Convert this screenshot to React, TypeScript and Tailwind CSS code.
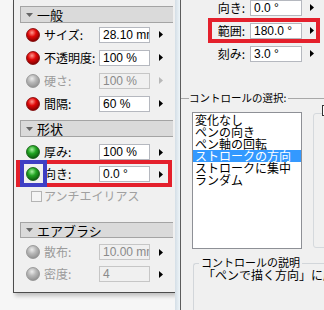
import React from "react";

const JP = "font-['Noto_Sans_CJK_JP',sans-serif]";
const NUM = "font-['Liberation_Sans_Narrow','Liberation_Sans',sans-serif]";

type Tone = "red" | "green" | "gray";

const SPHERE: Record<Tone, [string, string, string]> = {
  red: ["#ff9a90", "#e00808", "#7c0000"],
  green: ["#a8f0a0", "#22a522", "#0c560c"],
  gray: ["#ececec", "#b8b8b8", "#8e8e8e"],
};

function Sphere({ tone }: { tone: Tone }) {
  const c = SPHERE[tone];
  const id = `sph-${tone}`;
  return (
    <svg width="14" height="14" viewBox="0 0 14 14" className="shrink-0">
      <defs>
        <radialGradient id={id} cx="42%" cy="32%" r="70%">
          <stop offset="0" stopColor={c[0]} />
          <stop offset="0.45" stopColor={c[1]} />
          <stop offset="1" stopColor={c[2]} />
        </radialGradient>
      </defs>
      <circle cx="7" cy="7" r="6.5" fill={`url(#${id})`} stroke={c[2]} strokeWidth="0.8" />
    </svg>
  );
}

function Arrow({ muted }: { muted?: boolean }) {
  return (
    <svg width="4" height="7" viewBox="0 0 4 7" className="shrink-0">
      <polygon points="0,0 4,3.5 0,7" fill={muted ? "#b8b8b8" : "#000"} />
    </svg>
  );
}

function Field({ value, disabled, w = "w-[51px]" }: { value: string; disabled?: boolean; w?: string }) {
  return (
    <div
      className={`${w} h-[16px] shrink-0 border px-[3px] flex items-center overflow-hidden whitespace-nowrap text-[12px] ${NUM} ${
        disabled ? "border-[#c6c6c6] bg-[#f0f0f0] text-[#8a8a8a]" : "border-[#b5b8bf] bg-white text-black"
      }`}
    >
      {value}
    </div>
  );
}

function Header({ title, h = "h-[17px]" }: { title: string; h?: string }) {
  return (
    <div className={`${h} flex items-center gap-[4px] border-y border-l border-[#a4a4a4] bg-[#dadada] pl-[5px]`}>
      <svg width="7" height="4" viewBox="0 0 7 4">
        <polygon points="0,0 7,0 3.5,4" fill="#666" />
      </svg>
      <span className={`${JP} text-[13px] leading-none text-black`}>{title}</span>
    </div>
  );
}

function Param({
  tone,
  label,
  value,
  disabled,
  mutedArrow,
  h = "h-[23px]",
}: {
  tone: Tone;
  label: string;
  value: string;
  disabled?: boolean;
  mutedArrow?: boolean;
  h?: string;
}) {
  return (
    <div className={`${h} flex items-center pl-[6px]`}>
      <Sphere tone={tone} />
      <span
        className={`${JP} ml-[4px] w-[55px] shrink-0 whitespace-nowrap text-[12px] leading-none ${
          disabled ? "text-[#9b9b9b]" : "text-black"
        }`}
      >
        {label}
      </span>
      <Field value={value} disabled={disabled} />
      <div className="ml-[9px]">
        <Arrow muted={mutedArrow} />
      </div>
    </div>
  );
}

function RightRow({ label, value }: { label: string; value: string }) {
  return (
    <div className="h-[23px] flex items-center">
      <span className={`${JP} w-[65px] pr-[1px] text-right text-[12px] leading-none text-black`}>{label}</span>
      <div className="ml-[4px]">
        <Field value={value} w="w-[52px]" />
      </div>
      <div className="ml-[8px]">
        <Arrow />
      </div>
    </div>
  );
}

const MODES = ["変化なし", "ペンの向き", "ペン軸の回転", "ストロークの方向", "ストロークに集中", "ランダム"];

export default function App() {
  return (
    <div className="relative w-[324px] h-[310px] overflow-hidden flex bg-[#f6f6f6]">
      {/* brush palette */}
      <div className="w-[175px] shrink-0 pl-[13px]">
        <div className="h-[293px] border-l border-b border-[#4c4c4c] bg-[#f0f0f0] pl-[6px] pr-[2px] pt-[6px] shadow-[2px_3px_4px_rgba(0,0,0,0.22)]">
          <Header title="一般" />
          <Param tone="red" label="サイズ:" value="28.10 mm" />
          <Param tone="red" label="不透明度:" value="100 %" />
          <Param tone="gray" label="硬さ:" value="100 %" disabled mutedArrow />
          <Param tone="red" label="間隔:" value="60 %" />

          <div className="mt-[5px]">
            <Header title="形状" />
          </div>
          <div className="mt-[4px]">
            <Param tone="green" label="厚み:" value="100 %" h="h-[22px]" />
            <Param tone="green" label="向き:" value="0.0 °" h="h-[22px]" />
            <div className="h-[22px] flex items-center pl-[11px]">
              <div className="w-[11px] h-[11px] border border-[#b4b4b4] bg-[#f4f4f4]" />
              <span className={`${JP} ml-[2px] text-[12px] leading-none text-[#a0a0a0]`}>アンチエイリアス</span>
            </div>
          </div>

          <div className="mt-[15px]">
            <Header title="エアブラシ" h="h-[16px]" />
          </div>
          <div className="mt-[3px]">
            <Param tone="gray" label="散布:" value="10.00 mm" disabled h="h-[22px]" />
            <Param tone="gray" label="密度:" value="4" disabled h="h-[22px]" />
          </div>
        </div>
      </div>

      {/* gap between the two windows */}
      <div className="w-[5px] shrink-0 bg-gradient-to-r from-[#d4dee6] to-[#eef5f9]" />

      {/* brush settings dialog */}
      <div className="flex-1 border-l border-[#5c5c5c] bg-[#f0f0f0]">
        <div className="-mt-[4px]">
          <RightRow label="向き:" value="0.0 °" />
          <RightRow label="範囲:" value="180.0 °" />
          <RightRow label="刻み:" value="3.0 °" />
        </div>

        <div className="mt-[26px] h-[14px] flex items-center">
          <div className="w-[8px] h-px bg-[#a8a8a8]" />
          <span className={`${JP} text-[10.5px] leading-none text-black whitespace-nowrap`}>コントロールの選択:</span>
          <div className="ml-[2px] flex-1 h-px bg-[#a8a8a8]" />
        </div>

        <div className="mt-[7px] flex items-start">
          <div className="ml-[11px] w-[110px] h-[137px] shrink-0 border border-[#8e9096] bg-white pt-[1px]">
            {MODES.map((m) => (
              <div
                key={m}
                className={`${JP} h-[12px] pl-[2px] text-[12px] leading-[12px] whitespace-nowrap ${
                  m === "ストロークの方向" ? "bg-[#3399ff] text-white" : "text-black"
                }`}
              >
                {m}
              </div>
            ))}
          </div>
          <div className="ml-[11px] mt-[1px] w-[40px] h-[135px] shrink-0 rounded-[3px] border border-[#d5d9dd]" />
        </div>

        <div className="relative ml-[12px] mt-[14px] h-[60px] rounded-tl-[3px] border-l border-t border-[#d2d6da]">
          <span className={`${JP} absolute -top-[7px] left-[5px] bg-[#f0f0f0] px-[2px] text-[11px] leading-none text-black whitespace-nowrap`}>
            コントロールの説明
          </span>
          <div className={`${JP} pt-[5px] pl-[9px] text-[12px] leading-[12px] text-black whitespace-nowrap`}>
            「ペンで描く方向」に応じ
          </div>
        </div>
      </div>

      {/* annotation boxes */}
      <div className="absolute left-[16px] top-[160px] w-[156px] h-[27px] border-4 border-[#e4202c]" />
      <div className="absolute left-[20px] top-[160px] w-[27px] h-[27px] border-4 border-[#3f3fc4]" />
      <div className="absolute left-[208px] top-[18px] w-[112px] h-[25px] border-4 border-[#e4202c]" />
      <div className="absolute left-[322px] top-[105px] w-[11px] h-[11px] border border-[#333] bg-white" />
    </div>
  );
}
